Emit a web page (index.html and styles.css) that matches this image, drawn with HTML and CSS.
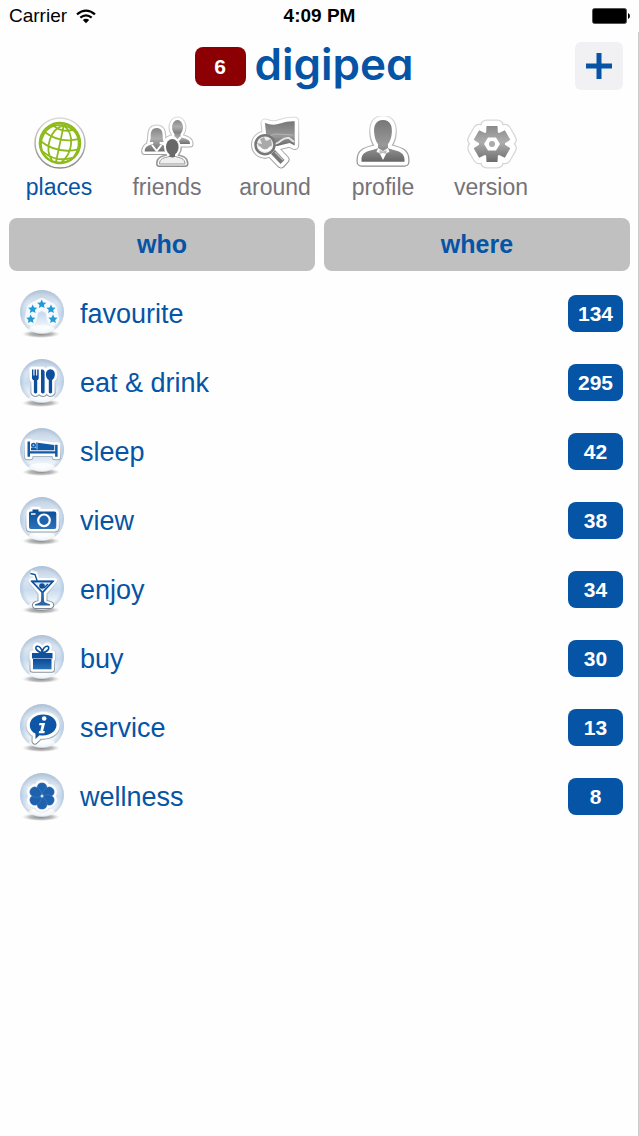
FILE: index.html
```
<!DOCTYPE html>
<html lang="en">
<head>
<meta charset="utf-8">
<meta name="viewport" content="width=device-width, initial-scale=1">
<title>digipea</title>
<link rel="stylesheet" href="styles.css">
</head>
<body>
<svg class="defs" aria-hidden="true">
  <defs>
    <linearGradient id="ball" x1="0" y1="0" x2="0" y2="1">
      <stop offset="0" stop-color="#b9cade"/><stop offset=".3" stop-color="#dce6f2"/><stop offset=".55" stop-color="#c9dcef"/><stop offset=".8" stop-color="#edf3f9"/><stop offset="1" stop-color="#f3f5f8"/>
    </linearGradient>
    <radialGradient id="rim" cx=".5" cy=".5" r=".5">
      <stop offset=".8" stop-color="#9db6d0" stop-opacity="0"/><stop offset="1" stop-color="#9db6d0" stop-opacity=".5"/>
    </radialGradient>
    <radialGradient id="shade" cx=".5" cy=".5" r=".5">
      <stop offset="0" stop-color="#888"/><stop offset=".6" stop-color="#aaa" stop-opacity=".8"/><stop offset="1" stop-color="#ccc" stop-opacity="0"/>
    </radialGradient>
    <linearGradient id="gray" x1="0" y1="0" x2="0" y2="1"><stop offset="0" stop-color="#858585"/><stop offset=".45" stop-color="#adadad"/><stop offset="1" stop-color="#707070"/></linearGradient>
    <linearGradient id="teeth" gradientUnits="userSpaceOnUse" x1="0" y1="10" x2="0" y2="46"><stop offset="0" stop-color="#8a8a8a"/><stop offset=".45" stop-color="#adadad"/><stop offset="1" stop-color="#6c6c6c"/></linearGradient>
    <linearGradient id="person" x1="0" y1="0" x2="0" y2="1"><stop offset="0" stop-color="#777"/><stop offset=".6" stop-color="#999"/><stop offset="1" stop-color="#666"/></linearGradient>
    <linearGradient id="edge" gradientUnits="userSpaceOnUse" x1="0" y1="0" x2="0" y2="54"><stop offset="0" stop-color="#dedede"/><stop offset="1" stop-color="#888"/></linearGradient>
    <linearGradient id="sea" x1="0" y1="0" x2="0" y2="1"><stop offset="0" stop-color="#0a4b96"/><stop offset="1" stop-color="#2c73b9"/></linearGradient>
    <linearGradient id="fade" gradientUnits="userSpaceOnUse" x1="0" y1="8" x2="0" y2="42"><stop offset="0" stop-color="#e3ebf3"/><stop offset=".5" stop-color="#c3cdd8"/><stop offset="1" stop-color="#7d8793"/></linearGradient>
    <symbol id="sphere" viewBox="0 0 48 52">
      <ellipse cx="23" cy="46" rx="19" ry="4" fill="url(#shade)"/>
      <circle cx="24" cy="24" r="22" fill="url(#ball)"/>
      <circle cx="24" cy="24" r="22" fill="url(#rim)"/>
      <ellipse cx="24" cy="41" rx="13" ry="4" fill="#fff" opacity=".7"/>
    </symbol>
    <path id="star" d="M0-4.600 1.400-1.600 4.600-1.300 2.200.9 2.900 4.100 0 2.400-2.900 4.100-2.200.9-4.600-1.300-1.400-1.600Z"/>
    <g id="cutlery">
      <path d="M14 12.500h1.400v6h1.100v-6h1.600v6h1.100v-6h1.500v8.500c0 1.200-.8 1.900-1.500 2.200V35.500q-1.700 2-3.300 0V23.200c-1-.3-1.900-1-1.900-2.200Z"/>
      <path d="M23 12.500q3.600-.5 3.600 3V35.500q-1.600 2-3.600 0Z"/>
      <path d="M32.400 12.200c6 0 5.400 9 1.700 10.800V35.500q-1.600 2-3.300 0V23c-3.800-1.800-4.400-10.800 1.600-10.800Z"/>
    </g>
    <g id="bed">
      <path d="M9.500 15.500h2.500v9.700h25.100v-6.500h2.500v12h-2.500v-3.100H12v3.100H9.500Z"/>
      <circle cx="15.500" cy="19.300" r="2.500"/>
      <path d="M18 16.400 36.300 19v5.200H13v-2.400h5Z"/>
    </g>
    <path id="camera" d="M12.500 16.500h2v-2h6v2h15.800q2 0 2 2v13.500q0 2-2 2H13q-2 0-2-2v-14q0-1.500 1.500-1.500Z"/>
    <g id="gift">
      <path d="M14 20h20.500v5.500H14ZM15 25h18.500v11.300H15Z"/>
      <path d="M24.300 20C18 19 15.500 14 18.500 12.600c3-.8 5.300 2.800 5.800 6 .5-3.200 2.800-6.800 5.800-6 3 1.400.5 6.400-5.800 7.400Z"/>
    </g>
    <path id="bubble" d="M25.200 12.500c8 0 13.800 4.500 13.800 10.800S33.200 34.200 25 34.200q-1.500 0-2.800-.2L17 39l.2-6.600c-4-1.900-6.200-5-6.200-9.100C11 17 17.200 12.500 25.200 12.500Z"/>
    <g id="flower">
      <path id="petal" d="M24 25C17 20 17.500 11.700 24 11.700S31 20 24 25Z"/>
      <use href="#petal" transform="rotate(60 24 25)"/><use href="#petal" transform="rotate(120 24 25)"/><use href="#petal" transform="rotate(180 24 25)"/><use href="#petal" transform="rotate(240 24 25)"/><use href="#petal" transform="rotate(300 24 25)"/>
    </g>
    <path id="glass" d="M12.500 9.500 17 10.500l2 6h17.500L26 29v10.500q8 .5 6.500 2h-15q-1-1.500 5.500-2V29L13 16.500h5"/>
    <path id="woman" d="M17.700 12c5 0 6 4 6 8 0 3 .5 5 1 6h-4v2c4 1.500 7 2 7 7.500h-22c0-5.500 4-6 8.500-7.500v-2h-3.500c.5-1 1-3 1-6 0-4 1-8 6-8Z"/>
    <g id="man"><ellipse cx="38.500" cy="11.500" rx="5.500" ry="7.500"/><path d="M35.500 17h6v4c5 2 9.500 2 9.500 7H27c0-5 3.500-5 8.500-7Z"/></g>
    <g id="front"><ellipse cx="33.300" cy="31" rx="6.300" ry="8"/><path d="M30 38h6.600v3c5 2 9.400 1.500 9.400 6.500H20.500c0-5 4.500-4.500 9.500-6.500Z"/></g>
    <g id="search"><circle cx="18" cy="28.700" r="9.500"/><path d="m25 35 2.500-2.500 10.500 11-4 4.500-10.500-11Z"/></g>
    <path id="map" d="M18 7q8 3 15 .5t14.700-2.200V29.500l-5-2.500-12.500 3-10-1Z"/>
    <path id="bust" d="M28 4c7 0 9.500 5.500 8.800 13-.4 5-1.800 8.500-3.800 11v4c5 3 16.500 2 16.500 11.500v2.200h-43v-2.200C6.500 34 18 35 23 32v-4c-2-2.500-3.400-6-3.800-11C18.500 9.500 21 4 28 4Z"/>
    <g id="gear"><circle cx="29" cy="28" r="13"/><path id="tooth" d="m23 18 .5-8h11l.5 8Z"/><use href="#tooth" transform="rotate(60 29 28)"/><use href="#tooth" transform="rotate(120 29 28)"/><use href="#tooth" transform="rotate(180 29 28)"/><use href="#tooth" transform="rotate(240 29 28)"/><use href="#tooth" transform="rotate(300 29 28)"/></g>
    <clipPath id="gear-shape"><circle cx="29" cy="28" r="13"/><path d="m23 18 .5-8h11l.5 8Z"/><path d="m23 18 .5-8h11l.5 8Z" transform="rotate(60 29 28)"/><path d="m23 18 .5-8h11l.5 8Z" transform="rotate(120 29 28)"/><path d="m23 18 .5-8h11l.5 8Z" transform="rotate(180 29 28)"/><path d="m23 18 .5-8h11l.5 8Z" transform="rotate(240 29 28)"/><path d="m23 18 .5-8h11l.5 8Z" transform="rotate(300 29 28)"/></clipPath>
  </defs>
</svg>

<div class="status">
  <span class="carrier">Carrier
    <svg width="20" height="15" viewBox="0 0 20 15" aria-hidden="true"><g fill="none" stroke="#000" stroke-width="2.200"><path d="M1 5.300q9-7.500 18 0"/><path d="M4.300 8.700q5.700-4.800 11.400 0"/></g><path d="M6.800 11q3.200-2.600 6.400 0L10 14.200Z"/></svg>
  </span>
  <span class="clock">4:09 PM</span>
  <svg class="battery" width="38" height="16" viewBox="0 0 38 16" aria-hidden="true"><rect x=".5" y=".5" width="34" height="15" rx="2" stroke="#555"/><path d="M36 5q2 1 2 3t-2 3Z"/></svg>
</div>

<main class="app">
  <header class="top">
    <div class="brand"><span class="alert">6</span><h1 class="logo">digipea</h1></div>
    <button class="add" type="button" aria-label="Add"><svg width="28" height="28" viewBox="0 0 28 28"><path d="M14 1v26M1 14h26" stroke="#0554a5" stroke-width="5"/></svg></button>
  </header>

  <nav class="tabs">
    <a class="tab current" href="#places"><svg class="tab-icon" viewBox="0 0 56 56" aria-hidden="true">
      <circle cx="29" cy="27" r="25" fill="#fff" stroke="url(#edge)" stroke-width="1.500"/>
      <g fill="none" stroke="#8dbb1b" stroke-width="1.800" transform="rotate(12 29 27)"><circle cx="29" cy="27" r="20" stroke-width="2.500"/><path d="M29 9v38M29 9C17 15 14 35 25 46M29 9c14 7 14 27 5 37M29 9C10 10 6 30 15 41M29 9c20 1 23 22 14 32M18 11q11 6 22 0M11 19q18 9 36 0M9 29q20 10 40 0M14 39q15 8 30 0"/></g>
    </svg>places</a>
    <a class="tab" href="#friends"><svg class="tab-icon" viewBox="0 0 56 56" aria-hidden="true">
      <g stroke-linejoin="round"><g fill="url(#edge)" stroke="url(#edge)" stroke-width="7"><use href="#man"/><use href="#woman"/><use href="#front"/></g>
      <g stroke="#fff" stroke-width="5" fill="#fff"><use href="#man"/><use href="#woman"/></g><g fill="url(#gray)"><use href="#man"/><use href="#woman"/></g><path d="m13 29 4.700 6 4.700-6M35 21l3.500 4 3.500-4" stroke="#fff" stroke-width="2" fill="none"/>
      <use href="#front" fill="#fff" stroke="#fff" stroke-width="4"/></g>
      <path d="M20.500 48c0-6 5-6 9.500-7.500h6.600C41 42 46 42 46 48Z" fill="#eee" stroke="#999"/><path d="M30.500 36h5.600v4.500q-2.800 2-5.600 0Z" fill="#686868"/><ellipse cx="33.300" cy="31" rx="6.300" ry="8" fill="#686868"/>
    </svg>friends</a>
    <a class="tab" href="#around"><svg class="tab-icon" viewBox="0 0 56 56" aria-hidden="true">
      <g stroke="url(#edge)" stroke-width="9" fill="#fff" stroke-linejoin="round"><use href="#map"/><use href="#search"/></g>
      <g stroke="#fff" stroke-width="7" fill="#fff" stroke-linejoin="round"><use href="#map"/><use href="#search"/></g>
      <use href="#map" fill="url(#person)"/><path d="M28 28c8-2 6-7 14-6l5 4" fill="none" stroke="#e4e4e4" stroke-width="2"/><path d="m20 21 8-3 18 1" fill="none" stroke="#b5b5b5"/>
      <circle cx="18" cy="28.700" r="9.500" fill="#efefef" stroke="#777" stroke-width="2.500"/><path d="m13 23 4-2 2 4 5-2 1 6-4 5-7-1-4-6 5 1Z" fill="#aaa"/><path d="M12 31q6 7 12 0" fill="none" stroke="#fff" stroke-width="2"/><path d="m26 36 9.500 10" stroke="#777" stroke-width="5.500"/><path d="m28 36 8 8" stroke="#bbb" stroke-width="1.500"/>
    </svg>around</a>
    <a class="tab" href="#profile"><svg class="tab-icon" viewBox="0 0 56 56" aria-hidden="true">
      <use href="#bust" fill="#aaa" stroke="url(#edge)" stroke-width="10" stroke-linejoin="round"/><use href="#bust" fill="#fff" stroke="#fff" stroke-width="7.500" stroke-linejoin="round"/><use href="#bust" fill="url(#person)"/>
      <path d="m23 32 5 3 5-3 1.500 4-3 1-3.500 7-3.500-7-3-1Z" fill="#fff"/><path d="m24.500 34 3.500 1.500 3.500-1.500v4L28 37l-3.500 1Z" fill="#bbb"/>
    </svg>profile</a>
    <a class="tab" href="#version"><svg class="tab-icon" viewBox="0 0 56 56" aria-hidden="true">
      <use href="#gear" fill="#aaa" stroke="url(#edge)" stroke-width="13" stroke-linejoin="round"/><use href="#gear" fill="#fff" stroke="#fff" stroke-width="10.500" stroke-linejoin="round"/><path d="M8 8h42v42H8Z" fill="url(#teeth)" clip-path="url(#gear-shape)"/><path d="m25 21.500h8l4 6.500-4 6.500h-8L21 28Z" fill="#fff"/><circle cx="29" cy="28" r="3" fill="#aaa"/>
    </svg>version</a>
  </nav>

  <div class="switch">
    <button type="button">who</button>
    <button type="button">where</button>
  </div>

  <ul class="list">
    <li><a class="row" href="#favourite"><svg class="row-icon" viewBox="0 0 48 52" aria-hidden="true"><use href="#sphere"/>
      <path d="M12.700 31 14.700 21 23.700 16l9.300 5 2 10" fill="none" stroke="#fff" stroke-width="12" stroke-linejoin="round" stroke-linecap="round" opacity=".8"/>
      <g fill="#209ad7"><use href="#star" x="12.700" y="31"/><use href="#star" x="14.700" y="21"/><use href="#star" x="23.700" y="16"/><use href="#star" x="33" y="21"/><use href="#star" x="35" y="31"/></g></svg><span class="name">favourite</span><span class="count">134</span></a></li>
    <li><a class="row" href="#eat"><svg class="row-icon" viewBox="0 0 48 52" aria-hidden="true"><use href="#sphere"/><use href="#cutlery" class="shadow"/><use href="#cutlery" class="halo"/><use href="#cutlery" fill="#0b4f9d"/></svg><span class="name">eat &amp; drink</span><span class="count">295</span></a></li>
    <li><a class="row" href="#sleep"><svg class="row-icon" viewBox="0 0 48 52" aria-hidden="true"><use href="#sphere"/><use href="#bed" class="shadow"/><use href="#bed" class="halo"/><use href="#bed" fill="#1259a6"/><circle cx="15.500" cy="19.300" r="1" fill="#a9c7e3"/><path d="M19 17v6.500" stroke="#a9c7e3"/></svg><span class="name">sleep</span><span class="count">42</span></a></li>
    <li><a class="row" href="#view"><svg class="row-icon" viewBox="0 0 48 52" aria-hidden="true"><use href="#sphere"/><use href="#camera" class="shadow"/><use href="#camera" class="halo"/><use href="#camera" fill="url(#sea)"/><circle cx="26" cy="25.300" r="5.800" fill="#2164ad" stroke="#fff" stroke-width="2.200"/><path d="M13 19h4.500" stroke="#fff" stroke-width="1.500"/></svg><span class="name">view</span><span class="count">38</span></a></li>
    <li><a class="row" href="#enjoy"><svg class="row-icon" viewBox="0 0 48 52" aria-hidden="true"><use href="#sphere"/>
      <use href="#glass" class="shadow"/><use href="#glass" class="halo"/>
      <path d="m12.500 9.500 4.500 1 2.200 6.500" fill="none" stroke="#0b4f9d" stroke-width="1.400"/><path d="M14 17.500h20.800L24.500 28.500Z" fill="#dce9f5" stroke="#0b4f9d" stroke-width="1.600"/><path d="M13 16.500h23l-1 1.800H14.500Z" fill="#0b4f9d"/><circle cx="24" cy="22" r="2.800" fill="#0b4f9d"/><path d="m26 24 4-4" stroke="#0b4f9d" stroke-width="1.200"/><path d="M23.300 28h2.400l.3 9q.5 2 6 3.200v1.300H17v-1.300q5.500-1.200 6-3.200Z" fill="#2866a8"/></svg><span class="name">enjoy</span><span class="count">34</span></a></li>
    <li><a class="row" href="#buy"><svg class="row-icon" viewBox="0 0 48 52" aria-hidden="true"><use href="#sphere"/><use href="#gift" class="shadow"/><use href="#gift" class="halo"/><path d="M14 20h20.500v5.500H14Z" fill="#0e529f"/><path d="M15 26h18.500v10.300H15Z" fill="url(#sea)"/><path d="M24.300 20C18 18.500 16.500 14.500 19 13.300c2.500-.6 4.800 2.700 5.300 5.700.5-3 2.800-6.300 5.300-5.700 2.500 1.200 1 5.200-5.300 6.700Z" fill="#fff" stroke="#0b4f9d" stroke-width="1.600"/></svg><span class="name">buy</span><span class="count">30</span></a></li>
    <li><a class="row" href="#service"><svg class="row-icon" viewBox="0 0 48 52" aria-hidden="true"><use href="#sphere"/><use href="#bubble" class="shadow"/><use href="#bubble" class="halo"/><path d="M25.200 12.500c7.600 0 13.300 4.500 13.300 10.300S33 33.500 25 33.500q-2 0-3.500-.3L17.500 37v-5.300c-3.500-1.700-5.700-4.700-5.700-8.400C11.800 17 17.600 12.500 25.200 12.500Z" fill="#0e55a5"/><circle cx="26.200" cy="16.500" r="2.300" fill="#fff"/><path d="M21.500 21h5.600l-2 8h1.700l-.4 2.300h-5.700l.4-2.300h1.200l1.300-5.700h-2.600Z" fill="#fff"/></svg><span class="name">service</span><span class="count">13</span></a></li>
    <li><a class="row" href="#wellness"><svg class="row-icon" viewBox="0 0 48 52" aria-hidden="true"><use href="#sphere"/><use href="#flower" class="shadow"/><use href="#flower" class="halo"/><use href="#flower" fill="#1e62ad" stroke="#5f95cb" stroke-width="0.300"/><circle cx="24" cy="25" r="1.500" fill="#cfe3f5"/></svg><span class="name">wellness</span><span class="count">8</span></a></li>
  </ul>
</main>
</body>
</html>
```
FILE: styles.css
```
* { box-sizing: border-box; }
body {
  margin: 0;
  min-height: 100vh;
  display: flex;
  flex-direction: column;
  background: #fefefe;
  color: #0554a5;
  font-family: "Liberation Sans", Arial, sans-serif;
}
a { color: inherit; text-decoration: none; }
button { border: 0; padding: 0; font: inherit; color: inherit; cursor: pointer; }
.defs { position: absolute; width: 0; height: 0; }

.status {
  display: grid;
  grid-template-columns: 1fr auto 1fr;
  align-items: center;
  height: 32px;
  padding: 0 9px;
  color: #000;
  font-size: 19px;
}
.carrier { display: flex; align-items: center; gap: 9px; }
.clock { font-weight: bold; }
.battery { justify-self: end; }

.app { flex: 1; border-right: 1px solid #ccc; }
.top {
  display: grid;
  grid-template-columns: 48px 1fr 48px;
  align-items: center;
  padding: 10px 15px 0;
}
.brand { grid-column: 2; display: flex; justify-content: center; align-items: center; gap: 9px; padding-right: 30px; }
.alert {
  width: 51px;
  border-radius: 8px;
  background: #8c0003;
  color: #fff;
  font-size: 21px;
  font-weight: bold;
  line-height: 39px;
  text-align: center;
}
.logo {
  margin: 0;
  font-family: Inter, "Liberation Sans", sans-serif;
  font-feature-settings: "cv11";
  font-size: 44px;
  font-weight: 600;
  line-height: 44px;
  padding-bottom: 4px;
}
.add { display: grid; place-items: center; height: 48px; border-radius: 6px; background: #f1f1f3; }

.tabs { display: grid; grid-template-columns: repeat(5, minmax(0, 108px)); padding: 26px 5px 0; }
.tab { display: flex; flex-direction: column; align-items: center; color: #757378; font-size: 23px; line-height: 30px; }
.tab.current { color: #0554a5; }
.tab-icon { width: 56px; height: 56px; }

.switch { display: grid; grid-template-columns: 1fr 1fr; gap: 9px; padding: 16px 8px 8px 9px; }
.switch button { height: 53px; border-radius: 8px; background: #c1c0c1; font-size: 25px; font-weight: bold; }

.list { margin: 0; padding: 0; list-style: none; }
.row { display: flex; align-items: center; height: 69px; padding: 0 15px 0 18px; }
.row-icon { width: 48px; height: 52px; }
.name { flex: 1; padding-left: 14px; font-size: 27px; line-height: 32px; }
.count { width: 55px; border-radius: 8px; background: #0554a5; color: #fff; font-size: 21px; font-weight: bold; line-height: 37px; text-align: center; }
.shadow { fill: url(#fade); stroke: url(#fade); stroke-width: 7px; stroke-linejoin: round; }
.halo { fill: #fff; stroke: #fff; stroke-width: 5px; stroke-linejoin: round; }
```
